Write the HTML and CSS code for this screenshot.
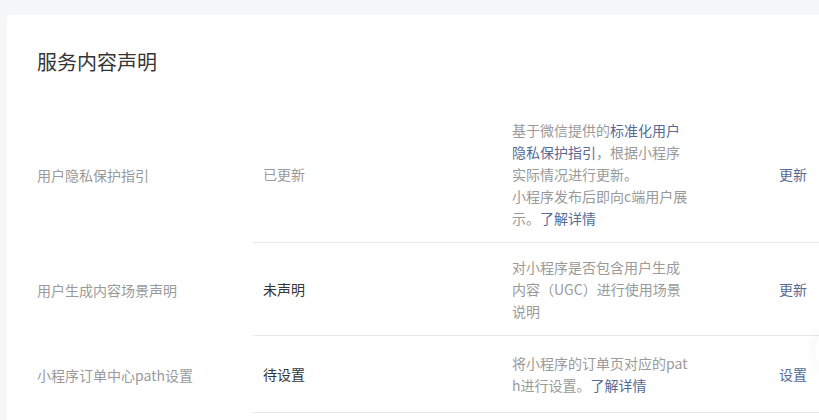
FILE: index.html
```html
<!DOCTYPE html>
<html lang="zh-CN">
<head>
<meta charset="utf-8">
<title>服务内容声明</title>
<link rel="stylesheet" href="styles.css">
</head>
<body>
<div class="page">
  <section class="card">
    <h2 class="title">服务内容声明</h2>
    <div class="table">
      <div class="row row-first">
        <div class="label">用户隐私保护指引</div>
        <div class="cells">
          <div class="status muted">已更新</div>
          <div class="desc">基于微信提供的<a class="link">标准化用户隐私保护指引</a>，根据小程序实际情况进行更新。<br>小程序发布后即向c端用户展示。<a class="link">了解详情</a></div>
          <div class="action"><a class="link">更新</a></div>
        </div>
      </div>
      <div class="row">
        <div class="label">用户生成内容场景声明</div>
        <div class="cells">
          <div class="status">未声明</div>
          <div class="desc">对小程序是否包含用户生成内容（UGC）进行使用场景说明</div>
          <div class="action"><a class="link">更新</a></div>
        </div>
      </div>
      <div class="row">
        <div class="label">小程序订单中心path设置</div>
        <div class="cells">
          <div class="status">待设置</div>
          <div class="desc">将小程序的订单页对应的path进行设置。<a class="link">了解详情</a></div>
          <div class="action"><a class="link">设置</a></div>
        </div>
      </div>
    </div>
  </section>
  <div class="float-shadow"></div>
</div>
</body>
</html>
```

FILE: styles.css
```css
* { box-sizing: border-box; }
html, body {
  margin: 0;
  padding: 0;
  height: 100%;
  overflow: hidden;
}
body {
  background: #f6f7f9;
  font-family: "Noto Sans CJK SC", "Noto Sans", sans-serif;
  color: #353535;
}
.page {
  position: relative;
  padding: 15px 0 0 7px;
  height: 100%;
}
.card {
  background: #ffffff;
  border-radius: 4px 0 0 0;
  padding: 33px 0 0 30px;
  height: 100%;
}
.title {
  margin: 0;
  font-size: 20px;
  font-weight: 400;
  line-height: 28px;
  color: #353535;
}
.table {
  margin-top: 30px;
}
.row {
  display: grid;
  grid-template-columns: 216px 1fr;
  align-items: stretch;
}
.label {
  font-size: 14px;
  color: #9a9a9a;
  display: flex;
  align-items: center;
  line-height: 22px;
}
.cells {
  display: flex;
  align-items: center;
  border-bottom: 1px solid #e7e7eb;
  padding: 13px 0;
  min-height: 77px;
  font-size: 14px;
  line-height: 22px;
}
.status {
  width: 259px;
  padding-left: 10px;
  color: #353535;
  flex: none;
}
.status.muted { color: #9a9a9a; }
.desc {
  width: 178px;
  flex: none;
  color: #9a9a9a;
  word-break: break-all;
}
.action {
  margin-left: 89px;
  flex: none;
}
.link {
  color: #576b95;
  text-decoration: none;
}
.float-shadow {
  position: absolute;
  right: -30px;
  top: 330px;
  width: 34px;
  height: 40px;
  border-radius: 50%;
  box-shadow: 0 0 14px rgba(0, 0, 0, 0.06);
  background: #ffffff;
}
```
